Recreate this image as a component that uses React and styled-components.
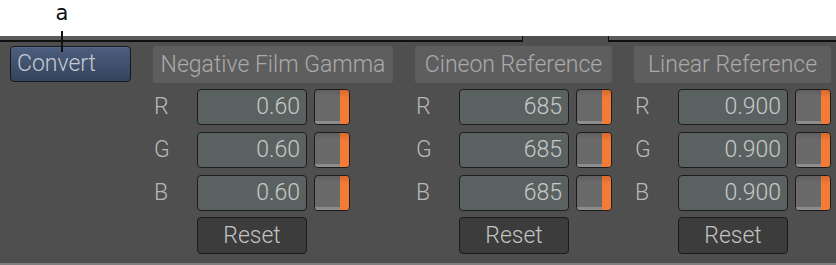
import React from 'react';
import styled, { createGlobalStyle } from 'styled-components';

const GlobalStyle = createGlobalStyle`
    html, body {
        margin: 0;
        padding: 0;
        background: #ffffff;
    }
    body {
        font-family: Roboto, "Liberation Sans", sans-serif;
        font-weight: 300;
    }
`;

const Page = styled.div`
    position: relative;
    width: 836px;
    height: 265px;
    overflow: hidden;
`;

const TopSpace = styled.div`
    height: 36px;
    background: #ffffff;
`;

const Callout = styled.div`
    position: absolute;
    left: 52px;
    top: 0;
    width: 20px;
    display: flex;
    flex-direction: column;
    align-items: center;
    color: #111;
    font-family: "DejaVu Sans", sans-serif;
    font-weight: 400;
    font-size: 21px;
    line-height: 27px;
    z-index: 2;

    &::after {
        content: '';
        display: block;
        width: 2px;
        height: 21px;
        margin-top: 4px;
        background: #111;
    }
`;

const Panel = styled.div`
    height: 227px;
    background: #4f4f4f;
    border-bottom: 2px solid #7e7e7e;
`;

const TabStrip = styled.div`
    display: flex;
    height: 6px;
`;

const TabSegment = styled.div`
    flex: ${p => (p.$grow ? '1 1 auto' : `0 0 ${p.$width}px`)};
    box-sizing: border-box;
    background: ${p => (p.$active ? '#4f4f4f' : '#5b5b5b')};
    border-bottom: ${p => (p.$active ? 'none' : '2px solid #101010')};
    border-right: ${p => (p.$edge === 'right' ? '1px solid #101010' : 'none')};
    border-left: ${p => (p.$edge === 'left' ? '1px solid #101010' : 'none')};
`;

const Body = styled.div`
    display: flex;
    align-items: flex-start;
    gap: 22px;
    padding: 4px 0 0 10px;
`;

const ConvertButton = styled.button`
    box-sizing: border-box;
    width: 121px;
    height: 36px;
    padding: 0 0 0 6px;
    text-align: left;
    border: 1px solid #16191f;
    border-radius: 4px;
    background: linear-gradient(#4d5f7f, #34435c);
    box-shadow: inset 0 1px 0 rgba(255, 255, 255, 0.08);
    color: #c4c9d1;
    font-family: inherit;
    font-weight: inherit;
    font-size: 23px;
    line-height: 34px;
`;

const Column = styled.div`
    flex: 0 0 ${p => p.$width}px;
    display: flex;
    flex-direction: column;
    gap: 6px;
`;

const SectionTitle = styled.div`
    height: 37px;
    border-radius: 3px;
    background: #5e5e5e;
    color: #aaaaaa;
    font-size: 23px;
    line-height: 37px;
    text-align: center;
    white-space: nowrap;
`;

const Grid = styled.div`
    display: grid;
    grid-template-columns: 37px 110px 36px;
    grid-auto-rows: 36px;
    column-gap: 7px;
    row-gap: 7px;
    width: 197px;
`;

const ChannelLabel = styled.div`
    color: #b7b7b7;
    font-size: 23px;
    line-height: 36px;
    padding-left: 1px;
`;

const ValueField = styled.div`
    box-sizing: border-box;
    border: 1px solid #1c1c1c;
    border-radius: 4px;
    background: #5a6261;
    color: #c8c8c8;
    font-size: 23px;
    line-height: 34px;
    text-align: right;
    padding-right: 6px;
`;

const Slider = styled.div`
    position: relative;
    box-sizing: border-box;
    border: 1px solid #1c1c1c;
    border-radius: 4px;
    background: linear-gradient(#5f5f5f, #6a6a6a 20%, #6a6a6a);
    overflow: hidden;

    &::before {
        content: '';
        position: absolute;
        left: 0;
        right: 9px;
        bottom: 0;
        height: 3px;
        background: #8d8d8d;
    }

    &::after {
        content: '';
        position: absolute;
        top: 0;
        right: 0;
        bottom: 0;
        width: 9px;
        background: linear-gradient(#d86a2c, #f47b36 25%, #f47b36);
    }
`;

const ResetButton = styled.button`
    grid-column: 2;
    box-sizing: border-box;
    border: 1px solid #1a1a1a;
    border-radius: 4px;
    background: #3c3c3c;
    color: #c2c2c2;
    font-family: inherit;
    font-weight: inherit;
    font-size: 23px;
    line-height: 34px;
    padding: 0;
    margin-top: -1px;
    height: 37px;
`;

const sections = [
    { title: 'Negative Film Gamma', value: '0.60', width: 240 },
    { title: 'Cineon Reference', value: '685', width: 196 },
    { title: 'Linear Reference', value: '0.900', width: 195 },
];

function Section({ title, value, width }) {
    return (
        <Column $width={width}>
            <SectionTitle>{title}</SectionTitle>
            <Grid>
                {['R', 'G', 'B'].map(ch => (
                    <React.Fragment key={ch}>
                        <ChannelLabel>{ch}</ChannelLabel>
                        <ValueField>{value}</ValueField>
                        <Slider />
                    </React.Fragment>
                ))}
                <ResetButton>Reset</ResetButton>
            </Grid>
        </Column>
    );
}

export default function App() {
    return (
        <Page>
            <GlobalStyle />
            <Callout>a</Callout>
            <TopSpace />
            <Panel>
                <TabStrip>
                    <TabSegment $width={523} $edge="right" />
                    <TabSegment $width={85} $active />
                    <TabSegment $grow $edge="left" />
                </TabStrip>
                <Body>
                    <ConvertButton>Convert</ConvertButton>
                    {sections.map(s => (
                        <Section key={s.title} {...s} />
                    ))}
                </Body>
            </Panel>
        </Page>
    );
}
